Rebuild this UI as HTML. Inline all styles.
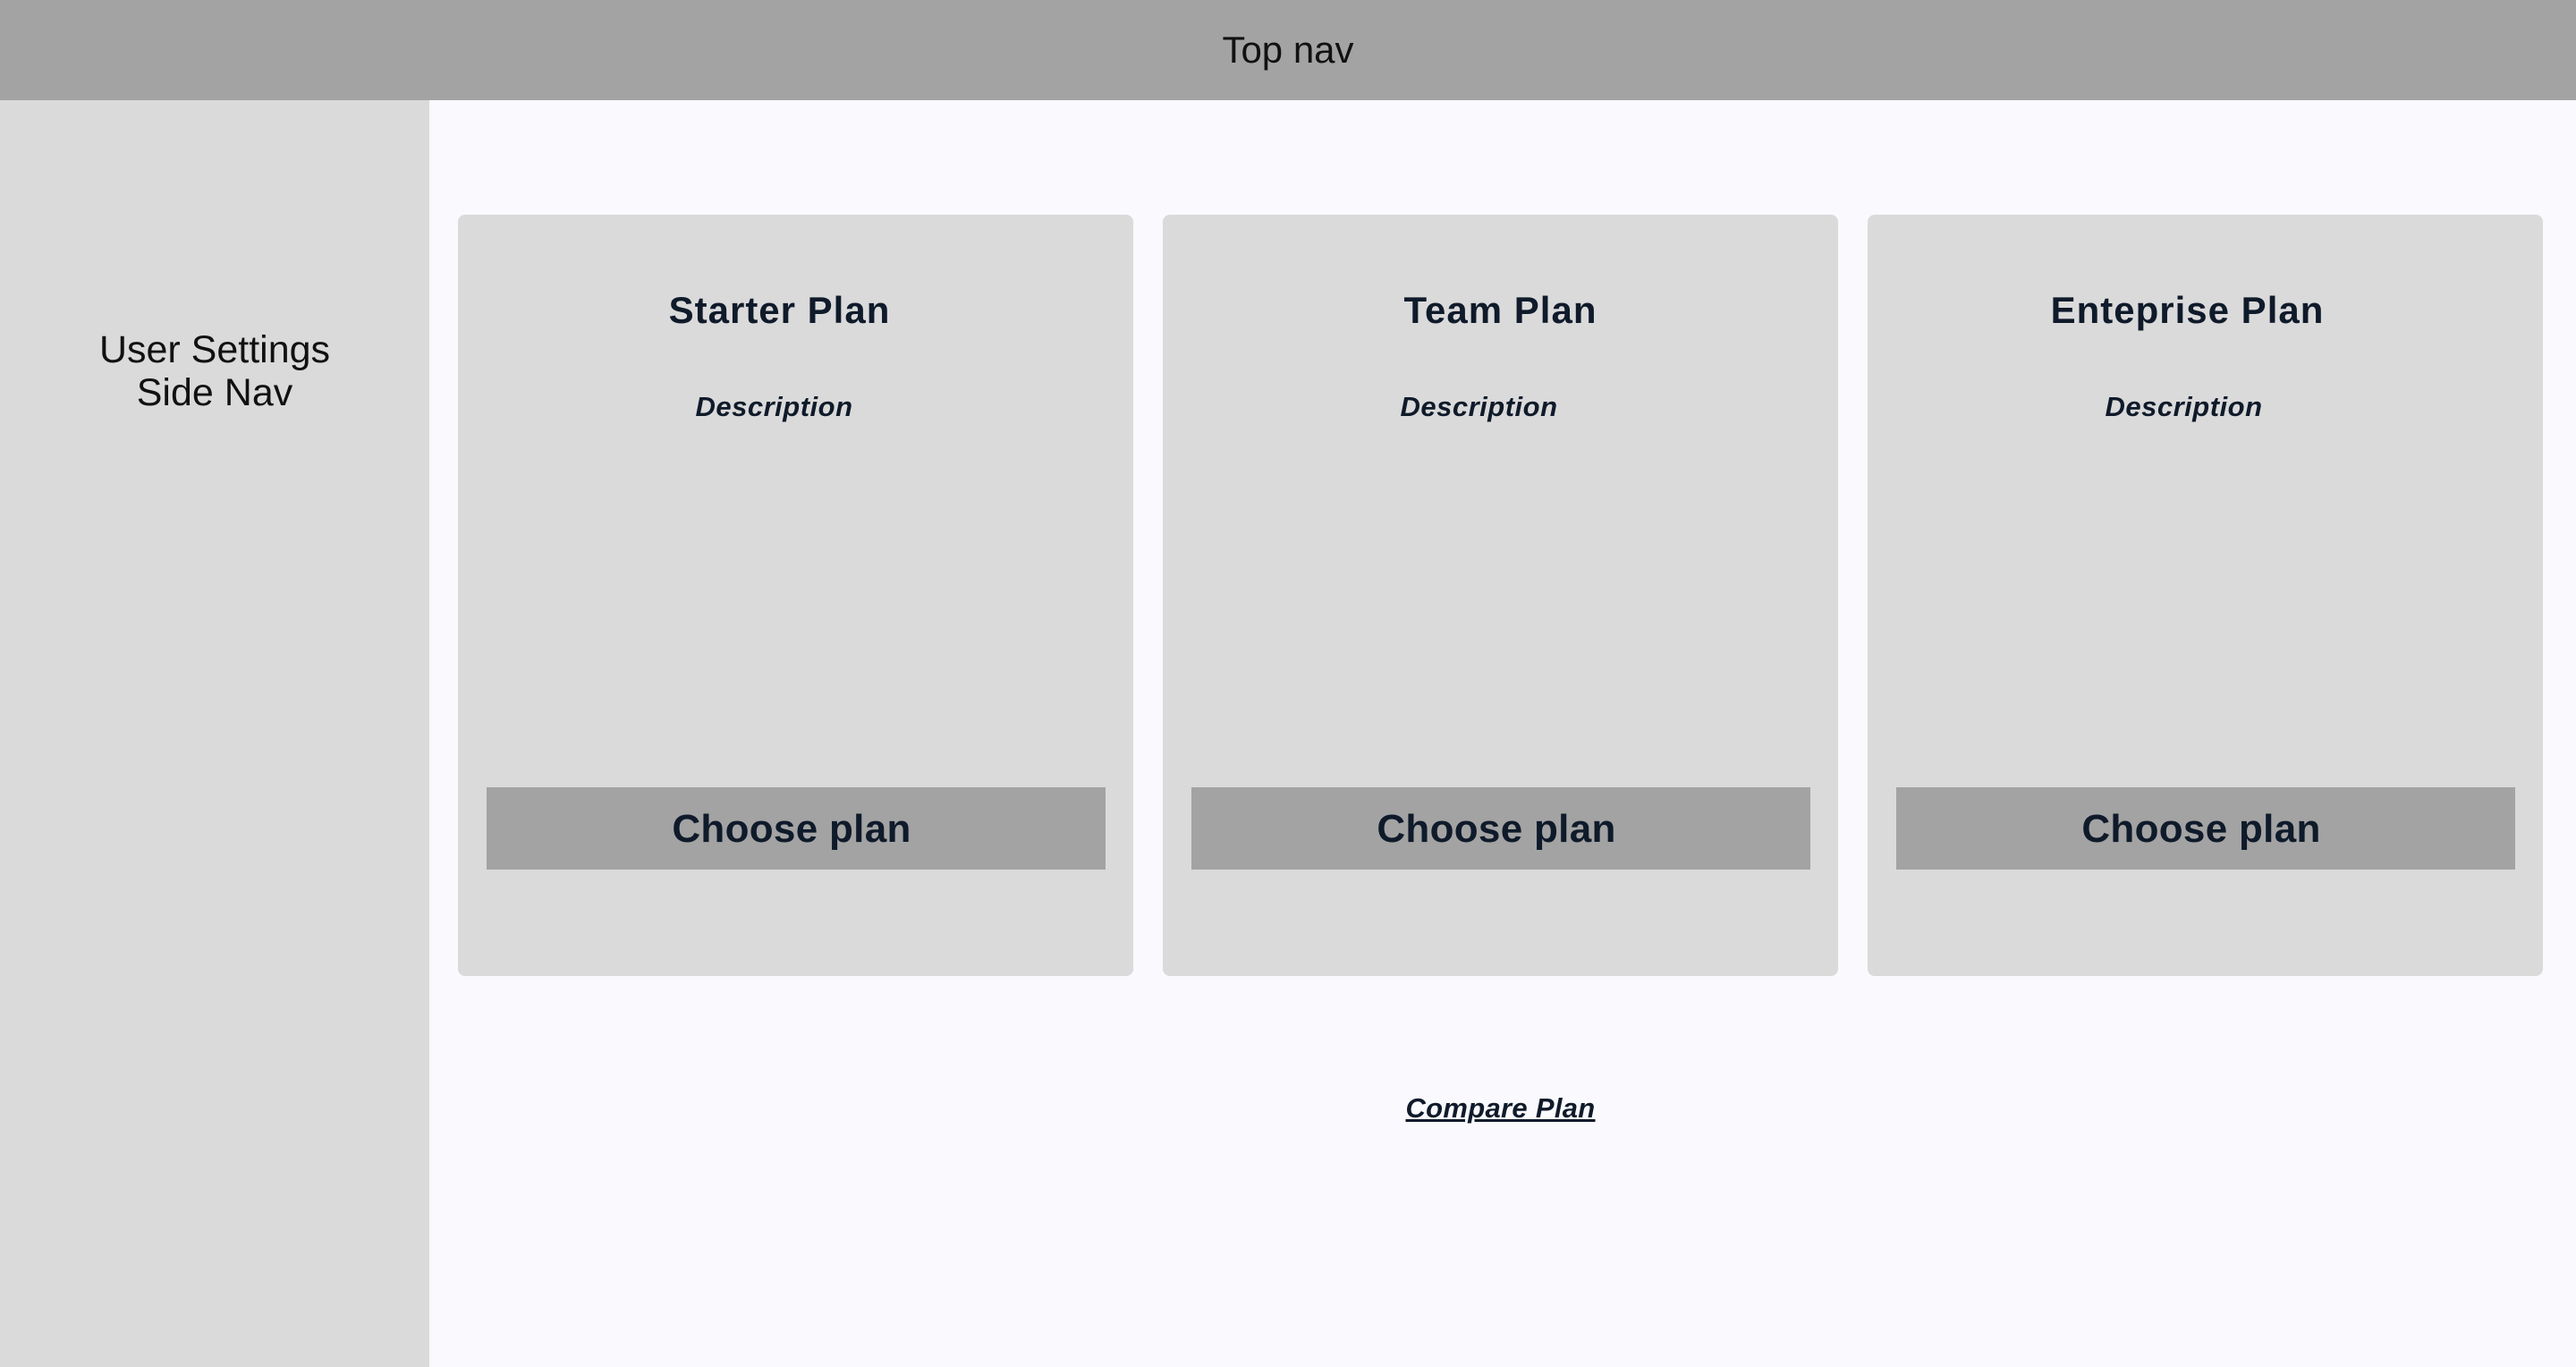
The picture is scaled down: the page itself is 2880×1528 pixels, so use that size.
<!DOCTYPE html>
<html><head><style>
*{margin:0;padding:0;box-sizing:border-box}
body{width:2880px;height:1528px;background:#f9f9fe;font-family:"Liberation Sans",sans-serif;position:relative;overflow:hidden}
.top{position:absolute;left:0;top:0;width:2880px;height:112px;background:#a3a3a3;text-align:center;line-height:112px;font-size:42px;color:#111}
.side{position:absolute;left:0;top:112px;width:480px;height:1416px;background:#dadada;text-align:center;font-size:43px;color:#111;padding-top:255px;line-height:48px}
.card{position:absolute;top:240px;width:755px;height:851px;background:#dadada;border-radius:8px;color:#0f1a2a}
.t{position:absolute;top:83px;left:0;width:100%;text-align:center;font-weight:bold;font-size:42px;letter-spacing:1px}
.d{position:absolute;top:197px;left:-24px;width:100%;text-align:center;font-weight:bold;font-style:italic;font-size:31px;letter-spacing:0.5px}
.b{position:absolute;left:32px;top:640px;width:692px;height:92px;background:#a3a3a3;text-align:center;line-height:94px;font-weight:bold;font-size:44px;letter-spacing:0.3px;text-indent:-10px}
.cmp{position:absolute;top:1221px;left:1300px;width:755px;text-align:center;font-weight:bold;font-style:italic;font-size:31px;text-decoration:underline;color:#0f1a2a;letter-spacing:0.3px}
</style></head><body>
<div class="top">Top nav</div>
<div class="side">User Settings<br>Side Nav</div>
<div class="card" style="left:512px"><div class="t" style="left:-18px">Starter Plan</div><div class="d">Description</div><div class="b">Choose plan</div></div>
<div class="card" style="left:1300px"><div class="t">Team Plan</div><div class="d">Description</div><div class="b">Choose plan</div></div>
<div class="card" style="left:2088px"><div class="t" style="left:-20px">Enteprise Plan</div><div class="d">Description</div><div class="b">Choose plan</div></div>
<div class="cmp">Compare Plan</div>
</body></html>
